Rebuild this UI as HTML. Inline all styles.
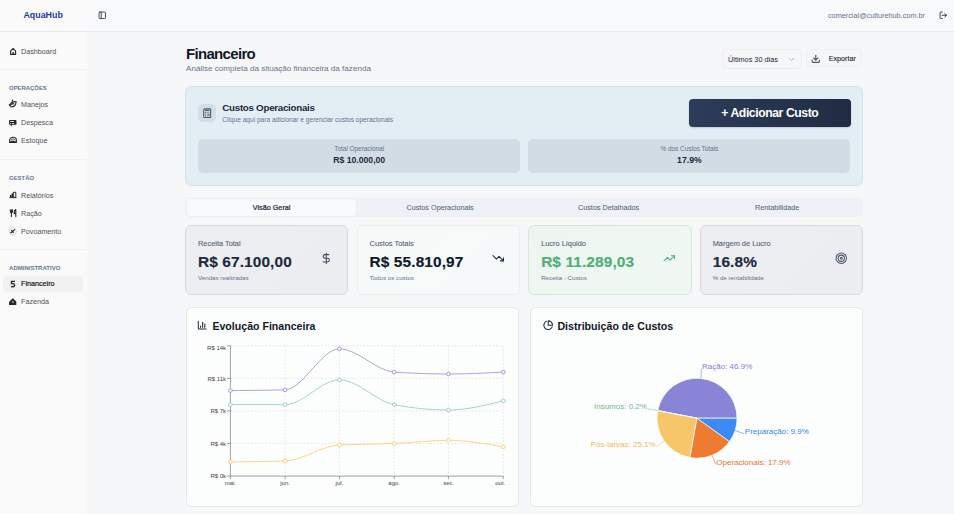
<!DOCTYPE html>
<html><head><meta charset="utf-8"><title>AquaHub - Financeiro</title>
<style>html,body{margin:0;padding:0;width:954px;height:514px;overflow:hidden;font-family:"Liberation Sans", sans-serif;}</style>
</head><body>
<div style="position:relative;width:954px;height:514px;overflow:hidden">
<div style="position:absolute;left:0px;top:0px;width:954px;height:514px;background:#f6f7f9"></div>
<div style="position:absolute;left:0px;top:0px;width:87px;height:514px;background:#fafafa"></div>
<div style="position:absolute;left:87px;top:0px;width:867px;height:31px;background:#f8f9fb"></div>
<div style="position:absolute;left:0px;top:31px;width:954px;height:1px;background:#e8ebef"></div>
<div style="position:absolute;left:23.4px;top:10.67px;font-size:8.9px;line-height:8.9px;font-weight:700;color:#1f3d9c;white-space:nowrap;">AquaHub</div>
<svg style="position:absolute;left:97.6px;top:10.6px;" width="8.6" height="8.6" viewBox="0 0 24 24" fill="none" stroke="#1e293b" stroke-width="2.2" stroke-linecap="round" stroke-linejoin="round"><rect width="18" height="18" x="3" y="3" rx="2"/><path d="M9 3v18"/></svg>
<div style="position:absolute;right:29px;top:11.92px;font-size:7.3px;line-height:7.3px;font-weight:400;color:#64748b;white-space:nowrap;">comercial@culturehub.com.br</div>
<svg style="position:absolute;left:938.8px;top:10.9px;" width="8.6" height="8.6" viewBox="0 0 24 24" fill="none" stroke="#1e293b" stroke-width="2.4" stroke-linecap="round" stroke-linejoin="round"><path d="M9 21H5a2 2 0 0 1-2-2V5a2 2 0 0 1 2-2h4"/><polyline points="16 17 21 12 16 7"/><line x1="21" x2="9" y1="12" y2="12"/></svg>
<div style="position:absolute;left:21px;top:48.01px;font-size:7.2px;line-height:7.2px;font-weight:400;color:#52525b;white-space:nowrap;">Dashboard</div>
<svg style="position:absolute;left:0;top:0" width="30" height="70" viewBox="0 0 30 70"><path d="M10.6 51.2L13.1 48.4L15.6 51.2V54.4H10.6Z" fill="none" stroke="#27272a" stroke-width="1.1" stroke-linejoin="round"/><rect x="12.4" y="52" width="1.4" height="2.6" fill="#27272a"/></svg>
<div style="position:absolute;left:0px;top:69px;width:87px;height:1px;background:#eceff3"></div>
<div style="position:absolute;left:9.1px;top:85.61px;font-size:5.9px;line-height:5.9px;font-weight:700;color:#66768f;white-space:nowrap;">OPERAÇÕES</div>
<div style="position:absolute;left:21px;top:101.21px;font-size:7.2px;line-height:7.2px;font-weight:400;color:#52525b;white-space:nowrap;">Manejos</div>
<div style="position:absolute;left:21px;top:119.01px;font-size:7.2px;line-height:7.2px;font-weight:400;color:#52525b;white-space:nowrap;">Despesca</div>
<div style="position:absolute;left:21px;top:137.01px;font-size:7.2px;line-height:7.2px;font-weight:400;color:#52525b;white-space:nowrap;">Estoque</div>
<div style="position:absolute;left:0px;top:158.6px;width:87px;height:1.0px;background:#eceff3"></div>
<div style="position:absolute;left:9.1px;top:176.21px;font-size:5.9px;line-height:5.9px;font-weight:700;color:#66768f;white-space:nowrap;">GESTÃO</div>
<div style="position:absolute;left:21px;top:192.01px;font-size:7.2px;line-height:7.2px;font-weight:400;color:#52525b;white-space:nowrap;">Relatórios</div>
<div style="position:absolute;left:21px;top:209.91px;font-size:7.2px;line-height:7.2px;font-weight:400;color:#52525b;white-space:nowrap;">Ração</div>
<div style="position:absolute;left:21px;top:227.91px;font-size:7.2px;line-height:7.2px;font-weight:400;color:#52525b;white-space:nowrap;">Povoamento</div>
<div style="position:absolute;left:0px;top:248.6px;width:87px;height:1.0px;background:#eceff3"></div>
<div style="position:absolute;left:9.1px;top:265.42px;font-size:6px;line-height:6px;font-weight:700;color:#66768f;white-space:nowrap;">ADMINISTRATIVO</div>
<div style="position:absolute;left:3.2px;top:275.5px;width:79.6px;height:16.0px;background:#f1f1f2;border-radius:4px"></div>
<div style="position:absolute;left:21px;top:280.01px;font-size:7.2px;line-height:7.2px;font-weight:400;color:#09090b;white-space:nowrap;-webkit-text-stroke:0.15px #09090b;">Financeiro</div>
<div style="position:absolute;left:21px;top:298.01px;font-size:7.2px;line-height:7.2px;font-weight:400;color:#52525b;white-space:nowrap;">Fazenda</div>
<svg style="position:absolute;left:0;top:0" width="30" height="320" viewBox="0 0 30 320" fill="none" stroke="#27272a" stroke-width="1.1" stroke-linecap="round" stroke-linejoin="round">
<path d="M9.8 105.6C10.6 103 13 101.3 16.3 101.7"/><path d="M10.6 106.8C13.4 107 15.6 105.2 16 102.6"/><path d="M12.2 101.2L12.7 100.1"/><path d="M11.8 104.2L13.6 103.6" stroke-width="1.4"/><path d="M9.4 104.4L10.4 105.6"/>
<rect x="9" y="119.9" width="7.5" height="4.8" rx="0.8" fill="#27272a" stroke="none"/><rect x="10.2" y="121" width="3.6" height="0.9" fill="#fafafa" stroke="none"/><rect x="10.2" y="123" width="1" height="0.8" fill="#fafafa" stroke="none"/><rect x="12.3" y="123" width="1.8" height="0.8" fill="#fafafa" stroke="none"/><path d="M11.3 124.8V125.8"/>
<path d="M9.6 142.4V140.2A3.4 3 0 0 1 16.4 140.2V142.4Z"/><rect x="10.4" y="140.8" width="5.2" height="1.8" fill="#27272a" stroke="none"/><path d="M11.2 139.6A2.2 1.8 0 0 1 14.8 139.6" stroke-width="0.8"/>
<rect x="10" y="195" width="1.6" height="2.7" fill="#27272a" stroke="none"/><rect x="11.6" y="193.4" width="1.6" height="4.3" fill="#27272a" stroke="none"/><rect x="13.7" y="192.3" width="2.1" height="5" stroke-width="1"/><path d="M9.8 197.7H16.2" stroke-width="0.8"/>
<path d="M10.3 209.8V211.6C10.3 212.4 11 212.8 11.4 212.8C11.8 212.8 12.5 212.4 12.5 211.6V209.8"/><path d="M11.4 209.8V216.6"/><path d="M15.8 213.8V209.6C14.6 210.2 14.2 211.4 14.2 212.6V213.4H15.8V216.6"/>
<circle cx="12.8" cy="231.3" r="3.6" stroke="#cfcfd3" stroke-width="0.9"/><path d="M10.9 232.8L13 231.2L14.6 229.6M11.6 230.3L13.2 232.4" stroke-width="1.2"/>
<path d="M15 281.4H11.5V283.6H13A1.6 1.6 0 0 1 13 286.8H11.2" stroke-width="1.4" stroke-linecap="butt" stroke-linejoin="miter"/>
<path d="M12.8 298.2L16.3 301.5V305H9.4V301.5Z" fill="#27272a" stroke="none"/><circle cx="12.9" cy="302" r="0.8" fill="#fafafa" stroke="none"/><rect x="9" y="302.3" width="2" height="2.7" fill="#27272a" stroke="none"/>
</svg>
<div style="position:absolute;left:186px;top:46.2px;font-size:15px;line-height:15px;font-weight:700;color:#111827;white-space:nowrap;letter-spacing:-0.68px;">Financeiro</div>
<div style="position:absolute;left:186px;top:64.84px;font-size:8.1px;line-height:8.1px;font-weight:400;color:#64748b;white-space:nowrap;">Análise completa da situação financeira da fazenda</div>
<div style="position:absolute;left:721.5px;top:49.3px;width:80.2px;height:19.8px;background:#f5f6f8;border:1px solid #eceef1;border-radius:4px;box-sizing:border-box"></div>
<div style="position:absolute;left:728px;top:55.62px;font-size:7.3px;line-height:7.3px;font-weight:400;color:#1f2937;white-space:nowrap;">Últimos 30 dias</div>
<svg style="position:absolute;left:786.5px;top:55.2px;" width="9" height="9" viewBox="0 0 24 24" fill="none" stroke="#9ca3af" stroke-width="2" stroke-linecap="round" stroke-linejoin="round"><path d="m6 9 6 6 6-6"/></svg>
<div style="position:absolute;left:805.6px;top:49.3px;width:56.9px;height:17.5px;background:#f5f6f8;border:1px solid #eceef1;border-radius:4px;box-sizing:border-box"></div>
<svg style="position:absolute;left:811.2px;top:53.6px;" width="9.6" height="9.6" viewBox="0 0 24 24" fill="none" stroke="#4b5563" stroke-width="2.8" stroke-linecap="round" stroke-linejoin="round"><path d="M21 15v4a2 2 0 0 1-2 2H5a2 2 0 0 1-2-2v-4"/><polyline points="7 10 12 15 17 10"/><line x1="12" x2="12" y1="15" y2="3"/></svg>
<div style="position:absolute;left:828.7px;top:55.41px;font-size:7.2px;line-height:7.2px;font-weight:400;color:#1f2937;white-space:nowrap;-webkit-text-stroke:0.12px #1f2937;">Exportar</div>
<div style="position:absolute;left:185.2px;top:86.2px;width:678.1px;height:99.8px;background:#e3edf4;border:1px solid #d6e2eb;border-radius:6px;box-sizing:border-box"></div>
<div style="position:absolute;left:198.2px;top:103.8px;width:17.6px;height:17.9px;background:#d3dde6;border-radius:5px"></div>
<svg style="position:absolute;left:201.8px;top:107.6px;" width="10.4" height="10.4" viewBox="0 0 24 24" fill="none" stroke="#475569" stroke-width="2.4" stroke-linecap="round" stroke-linejoin="round"><rect width="16" height="20" x="4" y="2" rx="2"/><line x1="8" x2="16" y1="6" y2="6"/><line x1="16" x2="16" y1="14" y2="18"/><path d="M16 10h.01"/><path d="M12 10h.01"/><path d="M8 10h.01"/><path d="M12 14h.01"/><path d="M8 14h.01"/><path d="M12 18h.01"/><path d="M8 18h.01"/></svg>
<div style="position:absolute;left:222.3px;top:102.6px;font-size:9.8px;line-height:9.8px;font-weight:700;color:#1e293b;white-space:nowrap;letter-spacing:-0.3px;">Custos Operacionais</div>
<div style="position:absolute;left:222.3px;top:117.44px;font-size:6.57px;line-height:6.57px;font-weight:400;color:#64748b;white-space:nowrap;">Clique aqui para adicionar e gerenciar custos operacionais</div>
<div style="position:absolute;left:689px;top:98.8px;width:161.5px;height:28.0px;background:linear-gradient(90deg,#2d3c5a,#212b43);border-radius:4px;box-shadow:0 1px 2px rgba(0,0,0,.15)"></div>
<div style="position:absolute;left:469.8px;width:600px;text-align:center;top:106.77px;font-size:12.2px;line-height:12.2px;font-weight:700;color:#ffffff;white-space:nowrap;letter-spacing:-0.42px;">+ Adicionar Custo</div>
<div style="position:absolute;left:198.2px;top:139px;width:321.9px;height:33.7px;background:#d2dce4;border-radius:5px"></div>
<div style="position:absolute;left:528.2px;top:139px;width:322.3px;height:33.7px;background:#d2dce4;border-radius:5px"></div>
<div style="position:absolute;left:59.2px;width:600px;text-align:center;top:145.58px;font-size:6.4px;line-height:6.4px;font-weight:400;color:#64748b;white-space:nowrap;">Total Operacional</div>
<div style="position:absolute;left:59.2px;width:600px;text-align:center;top:155.67px;font-size:8.66px;line-height:8.66px;font-weight:700;color:#1e293b;white-space:nowrap;">R$ 10.000,00</div>
<div style="position:absolute;left:389.4px;width:600px;text-align:center;top:145.58px;font-size:6.4px;line-height:6.4px;font-weight:400;color:#64748b;white-space:nowrap;">% dos Custos Totais</div>
<div style="position:absolute;left:389.4px;width:600px;text-align:center;top:155.67px;font-size:8.66px;line-height:8.66px;font-weight:700;color:#1e293b;white-space:nowrap;">17.9%</div>
<div style="position:absolute;left:185.2px;top:197.8px;width:678.1px;height:19.7px;background:#eef2f7;border-radius:5px"></div>
<div style="position:absolute;left:187.3px;top:199.4px;width:168.7px;height:16.2px;background:#f8fafc;border-radius:4px;box-shadow:0 0 0 0.5px #e8ecf1"></div>
<div style="position:absolute;left:-28.44px;width:600px;text-align:center;top:204.06px;font-size:7.25px;line-height:7.25px;font-weight:400;color:#1e293b;white-space:nowrap;-webkit-text-stroke:0.22px #1e293b;">Visão Geral</div>
<div style="position:absolute;left:140.09px;width:600px;text-align:center;top:204.06px;font-size:7.25px;line-height:7.25px;font-weight:400;color:#5b677a;white-space:nowrap;-webkit-text-stroke:0.08px #5b677a;">Custos Operacionais</div>
<div style="position:absolute;left:308.61px;width:600px;text-align:center;top:204.06px;font-size:7.25px;line-height:7.25px;font-weight:400;color:#5b677a;white-space:nowrap;-webkit-text-stroke:0.08px #5b677a;">Custos Detalhados</div>
<div style="position:absolute;left:477.14px;width:600px;text-align:center;top:204.06px;font-size:7.25px;line-height:7.25px;font-weight:400;color:#5b677a;white-space:nowrap;-webkit-text-stroke:0.08px #5b677a;">Rentabilidade</div>
<div style="position:absolute;left:185.2px;top:225.3px;width:163.3px;height:69.3px;background:linear-gradient(135deg,#eceef1,#ebedf0);border:1px solid #d5d9df;border-radius:6px;box-sizing:border-box"></div>
<div style="position:absolute;left:198.0px;top:239.74px;font-size:7.4px;line-height:7.4px;font-weight:400;color:#566173;white-space:nowrap;-webkit-text-stroke:0.1px #566173;">Receita Total</div>
<div style="position:absolute;left:198.0px;top:254.16px;font-size:15.4px;line-height:15.4px;font-weight:700;color:#1e293b;white-space:nowrap;letter-spacing:0.12px;-webkit-text-stroke:0.15px #1e293b;">R$ 67.100,00</div>
<div style="position:absolute;left:198.0px;top:275.25px;font-size:6.2px;line-height:6.2px;font-weight:400;color:#64748b;white-space:nowrap;">Vendas realizadas</div>
<svg style="position:absolute;left:320.0px;top:251.9px;" width="12.5" height="12.5" viewBox="0 0 24 24" fill="none" stroke="#3f4a5e" stroke-width="2" stroke-linecap="round" stroke-linejoin="round"><line x1="12" x2="12" y1="2" y2="22"/><path d="M17 5H9.5a3.5 3.5 0 0 0 0 7h5a3.5 3.5 0 0 1 0 7H6"/></svg>
<div style="position:absolute;left:356.77px;top:225.3px;width:163.3px;height:69.3px;background:linear-gradient(135deg,#f5faf9,#f6f9f9);border:1px solid #e8f0ee;border-radius:6px;box-sizing:border-box"></div>
<div style="position:absolute;left:369.57px;top:239.74px;font-size:7.4px;line-height:7.4px;font-weight:400;color:#566173;white-space:nowrap;-webkit-text-stroke:0.1px #566173;">Custos Totais</div>
<div style="position:absolute;left:369.57px;top:254.16px;font-size:15.4px;line-height:15.4px;font-weight:700;color:#111827;white-space:nowrap;letter-spacing:0.12px;-webkit-text-stroke:0.15px #111827;">R$ 55.810,97</div>
<div style="position:absolute;left:369.57px;top:275.25px;font-size:6.2px;line-height:6.2px;font-weight:400;color:#64748b;white-space:nowrap;">Todos os custos</div>
<svg style="position:absolute;left:491.57px;top:251.9px;" width="12.5" height="12.5" viewBox="0 0 24 24" fill="none" stroke="#1e293b" stroke-width="2" stroke-linecap="round" stroke-linejoin="round"><polyline points="22 17 13.5 8.5 8.5 13.5 2 7"/><polyline points="16 17 22 17 22 11"/></svg>
<div style="position:absolute;left:528.34px;top:225.3px;width:163.3px;height:69.3px;background:linear-gradient(135deg,#ecf6ef,#f0f7f2);border:1px solid #d3eadb;border-radius:6px;box-sizing:border-box"></div>
<div style="position:absolute;left:541.14px;top:239.74px;font-size:7.4px;line-height:7.4px;font-weight:400;color:#566173;white-space:nowrap;-webkit-text-stroke:0.1px #566173;">Lucro Líquido</div>
<div style="position:absolute;left:541.14px;top:254.16px;font-size:15.4px;line-height:15.4px;font-weight:700;color:#4caf7a;white-space:nowrap;letter-spacing:0.12px;-webkit-text-stroke:0.15px #4caf7a;">R$ 11.289,03</div>
<div style="position:absolute;left:541.14px;top:275.25px;font-size:6.2px;line-height:6.2px;font-weight:400;color:#64748b;white-space:nowrap;">Receita - Custos</div>
<svg style="position:absolute;left:663.14px;top:251.9px;" width="12.5" height="12.5" viewBox="0 0 24 24" fill="none" stroke="#4caf7a" stroke-width="2" stroke-linecap="round" stroke-linejoin="round"><polyline points="22 7 13.5 15.5 8.5 10.5 2 17"/><polyline points="16 7 22 7 22 13"/></svg>
<div style="position:absolute;left:699.91px;top:225.3px;width:163.3px;height:69.3px;background:linear-gradient(135deg,#eceef1,#ebedf0);border:1px solid #d5d9df;border-radius:6px;box-sizing:border-box"></div>
<div style="position:absolute;left:712.71px;top:239.74px;font-size:7.4px;line-height:7.4px;font-weight:400;color:#566173;white-space:nowrap;-webkit-text-stroke:0.1px #566173;">Margem de Lucro</div>
<div style="position:absolute;left:712.71px;top:254.16px;font-size:15.4px;line-height:15.4px;font-weight:700;color:#1e293b;white-space:nowrap;letter-spacing:0.12px;-webkit-text-stroke:0.15px #1e293b;">16.8%</div>
<div style="position:absolute;left:712.71px;top:275.25px;font-size:6.2px;line-height:6.2px;font-weight:400;color:#64748b;white-space:nowrap;">% de rentabilidade</div>
<svg style="position:absolute;left:834.71px;top:251.9px;" width="12.5" height="12.5" viewBox="0 0 24 24" fill="none" stroke="#4a556b" stroke-width="2" stroke-linecap="round" stroke-linejoin="round"><circle cx="12" cy="12" r="10"/><circle cx="12" cy="12" r="6"/><circle cx="12" cy="12" r="2"/></svg>
<div style="position:absolute;left:185.5px;top:307px;width:333.0px;height:200px;background:#fcfdfd;border:1px solid #e5e8ec;border-radius:6px;box-sizing:border-box"></div>
<div style="position:absolute;left:530.2px;top:307px;width:333.1px;height:200px;background:#fcfdfd;border:1px solid #e5e8ec;border-radius:6px;box-sizing:border-box"></div>
<svg style="position:absolute;left:197.4px;top:320.1px;" width="10.4" height="10.4" viewBox="0 0 24 24" fill="none" stroke="#1e293b" stroke-width="2.4" stroke-linecap="round" stroke-linejoin="round"><path d="M3 3v16a2 2 0 0 0 2 2h16"/><path d="M18 17V9"/><path d="M13 17V5"/><path d="M8 17v-3"/></svg>
<div style="position:absolute;left:212.4px;top:321.13px;font-size:10.6px;line-height:10.6px;font-weight:700;color:#111827;white-space:nowrap;">Evolução Financeira</div>
<svg style="position:absolute;left:542.5px;top:320.2px;" width="10.4" height="10.4" viewBox="0 0 24 24" fill="none" stroke="#1e293b" stroke-width="2.4" stroke-linecap="round" stroke-linejoin="round"><path d="M21.21 15.89A10 10 0 1 1 8 2.83"/><path d="M22 12A10 10 0 0 0 12 2v10z"/></svg>
<div style="position:absolute;left:557.4px;top:321.08px;font-size:10.65px;line-height:10.65px;font-weight:700;color:#111827;white-space:nowrap;">Distribuição de Custos</div>
<svg style="position:absolute;left:0;top:0" width="954" height="514" viewBox="0 0 954 514"><line x1="230.4" x2="503.3" y1="345.8" y2="345.8" stroke="#d0d0d0" stroke-width="0.6" stroke-dasharray="1.5 2"/><line x1="230.4" x2="503.3" y1="378.3" y2="378.3" stroke="#d0d0d0" stroke-width="0.6" stroke-dasharray="1.5 2"/><line x1="230.4" x2="503.3" y1="410.9" y2="410.9" stroke="#d0d0d0" stroke-width="0.6" stroke-dasharray="1.5 2"/><line x1="230.4" x2="503.3" y1="443.4" y2="443.4" stroke="#d0d0d0" stroke-width="0.6" stroke-dasharray="1.5 2"/><line x1="285.1" x2="285.1" y1="345.8" y2="476.1" stroke="#d0d0d0" stroke-width="0.6" stroke-dasharray="1.5 2"/><line x1="339.4" x2="339.4" y1="345.8" y2="476.1" stroke="#d0d0d0" stroke-width="0.6" stroke-dasharray="1.5 2"/><line x1="394.2" x2="394.2" y1="345.8" y2="476.1" stroke="#d0d0d0" stroke-width="0.6" stroke-dasharray="1.5 2"/><line x1="448.4" x2="448.4" y1="345.8" y2="476.1" stroke="#d0d0d0" stroke-width="0.6" stroke-dasharray="1.5 2"/><line x1="503.3" x2="503.3" y1="345.8" y2="476.1" stroke="#d0d0d0" stroke-width="0.6" stroke-dasharray="1.5 2"/><line x1="230.4" x2="230.4" y1="345.8" y2="476.1" stroke="#666" stroke-width="0.6"/><line x1="230.4" x2="503.3" y1="476.1" y2="476.1" stroke="#8a8a8a" stroke-width="0.8"/><line x1="226.8" x2="230.4" y1="345.8" y2="345.8" stroke="#666" stroke-width="0.6"/><text x="226.1" y="349.9" font-family="Liberation Sans" font-size="6" fill="#444" text-anchor="end">R$ 14k</text><line x1="226.8" x2="230.4" y1="378.3" y2="378.3" stroke="#666" stroke-width="0.6"/><text x="226.1" y="380.6" font-family="Liberation Sans" font-size="6" fill="#444" text-anchor="end">R$ 11k</text><line x1="226.8" x2="230.4" y1="410.9" y2="410.9" stroke="#666" stroke-width="0.6"/><text x="226.1" y="413.2" font-family="Liberation Sans" font-size="6" fill="#444" text-anchor="end">R$ 7k</text><line x1="226.8" x2="230.4" y1="443.4" y2="443.4" stroke="#666" stroke-width="0.6"/><text x="226.1" y="445.7" font-family="Liberation Sans" font-size="6" fill="#444" text-anchor="end">R$ 4k</text><line x1="226.8" x2="230.4" y1="476.1" y2="476.1" stroke="#666" stroke-width="0.6"/><text x="226.1" y="478.40000000000003" font-family="Liberation Sans" font-size="6" fill="#444" text-anchor="end">R$ 0k</text><line x1="230.4" x2="230.4" y1="476.1" y2="479.2" stroke="#666" stroke-width="0.6"/><text x="230.4" y="485.4" font-family="Liberation Sans" font-size="6" fill="#444" text-anchor="middle">mai.</text><line x1="285.1" x2="285.1" y1="476.1" y2="479.2" stroke="#666" stroke-width="0.6"/><text x="285.1" y="485.4" font-family="Liberation Sans" font-size="6" fill="#444" text-anchor="middle">jun.</text><line x1="339.4" x2="339.4" y1="476.1" y2="479.2" stroke="#666" stroke-width="0.6"/><text x="339.4" y="485.4" font-family="Liberation Sans" font-size="6" fill="#444" text-anchor="middle">jul.</text><line x1="394.2" x2="394.2" y1="476.1" y2="479.2" stroke="#666" stroke-width="0.6"/><text x="394.2" y="485.4" font-family="Liberation Sans" font-size="6" fill="#444" text-anchor="middle">ago.</text><line x1="448.4" x2="448.4" y1="476.1" y2="479.2" stroke="#666" stroke-width="0.6"/><text x="448.4" y="485.4" font-family="Liberation Sans" font-size="6" fill="#444" text-anchor="middle">set.</text><line x1="503.3" x2="503.3" y1="476.1" y2="479.2" stroke="#666" stroke-width="0.6"/><text x="500.3" y="485.4" font-family="Liberation Sans" font-size="6" fill="#444" text-anchor="middle">out.</text><path d="M230.4,390.6 C248.63,390.47 266.87,390.33 285.1,389.8 C303.20,389.27 321.30,348.80 339.4,348.8 C357.67,348.80 375.93,370.82 394.2,372.1 C412.27,373.37 430.33,374.00 448.4,374.0 C466.70,374.00 485.00,373.05 503.3,372.1" fill="none" stroke="#8884d8" stroke-width="0.9" stroke-opacity="0.8"/><circle cx="230.4" cy="390.6" r="1.8" fill="#fff" stroke="#8884d8" stroke-width="0.8"/><circle cx="285.1" cy="389.8" r="1.8" fill="#fff" stroke="#8884d8" stroke-width="0.8"/><circle cx="339.4" cy="348.8" r="1.8" fill="#fff" stroke="#8884d8" stroke-width="0.8"/><circle cx="394.2" cy="372.1" r="1.8" fill="#fff" stroke="#8884d8" stroke-width="0.8"/><circle cx="448.4" cy="374.0" r="1.8" fill="#fff" stroke="#8884d8" stroke-width="0.8"/><circle cx="503.3" cy="372.1" r="1.8" fill="#fff" stroke="#8884d8" stroke-width="0.8"/><path d="M230.4,404.6 C248.63,404.60 266.87,404.60 285.1,404.6 C303.20,404.60 321.30,379.80 339.4,379.8 C357.67,379.80 375.93,401.13 394.2,404.7 C412.27,408.23 430.33,410.00 448.4,410.0 C466.70,410.00 485.00,405.45 503.3,400.9" fill="none" stroke="#82ca9d" stroke-width="0.9" stroke-opacity="0.8"/><circle cx="230.4" cy="404.6" r="1.8" fill="#fff" stroke="#82ca9d" stroke-width="0.8"/><circle cx="285.1" cy="404.6" r="1.8" fill="#fff" stroke="#82ca9d" stroke-width="0.8"/><circle cx="339.4" cy="379.8" r="1.8" fill="#fff" stroke="#82ca9d" stroke-width="0.8"/><circle cx="394.2" cy="404.7" r="1.8" fill="#fff" stroke="#82ca9d" stroke-width="0.8"/><circle cx="448.4" cy="410.0" r="1.8" fill="#fff" stroke="#82ca9d" stroke-width="0.8"/><circle cx="503.3" cy="400.9" r="1.8" fill="#fff" stroke="#82ca9d" stroke-width="0.8"/><path d="M230.4,461.9 C248.63,461.75 266.87,461.60 285.1,461.0 C303.20,460.40 321.30,445.76 339.4,444.9 C357.67,444.03 375.93,444.37 394.2,443.6 C412.27,442.83 430.33,440.30 448.4,440.3 C466.70,440.30 485.00,443.60 503.3,446.9" fill="none" stroke="#ffc658" stroke-width="0.9" stroke-opacity="0.8"/><circle cx="230.4" cy="461.9" r="1.8" fill="#fff" stroke="#ffc658" stroke-width="0.8"/><circle cx="285.1" cy="461.0" r="1.8" fill="#fff" stroke="#ffc658" stroke-width="0.8"/><circle cx="339.4" cy="444.9" r="1.8" fill="#fff" stroke="#ffc658" stroke-width="0.8"/><circle cx="394.2" cy="443.6" r="1.8" fill="#fff" stroke="#ffc658" stroke-width="0.8"/><circle cx="448.4" cy="440.3" r="1.8" fill="#fff" stroke="#ffc658" stroke-width="0.8"/><circle cx="503.3" cy="446.9" r="1.8" fill="#fff" stroke="#ffc658" stroke-width="0.8"/><path d="M697.0,418.2 L737.00,418.20 A40.0,40.0 0 0 0 657.76,410.46 Z" fill="#8884d8" stroke="#fff" stroke-width="0.7"/><path d="M700.89,378.39 L701.50,368.90" stroke="#8884d8" stroke-width="0.6" fill="none"/><text x="702.0" y="368.9" font-family="Liberation Sans" font-size="8" fill="#8581d6" text-anchor="start">Ração: 46.9%</text><path d="M697.0,418.2 L657.76,410.46 A40.0,40.0 0 0 0 657.66,410.95 Z" fill="#82ca9d" stroke="#fff" stroke-width="0.7"/><path d="M657.71,410.70 L647.40,408.80" stroke="#82ca9d" stroke-width="0.6" fill="none"/><text x="646.9" y="408.8" font-family="Liberation Sans" font-size="8" fill="#6fbb8c" text-anchor="end">Insumos: 0.2%</text><path d="M697.0,418.2 L657.66,410.95 A40.0,40.0 0 0 0 690.00,457.58 Z" fill="#f7c66b" stroke="#fff" stroke-width="0.7"/><path d="M664.13,440.99 L656.20,446.60" stroke="#f7c66b" stroke-width="0.6" fill="none"/><text x="655.7" y="446.6" font-family="Liberation Sans" font-size="8" fill="#f2bb55" text-anchor="end">Pós-larvas: 25.1%</text><path d="M697.0,418.2 L690.00,457.58 A40.0,40.0 0 0 0 729.51,441.51 Z" fill="#ef7b30" stroke="#fff" stroke-width="0.7"/><path d="M712.07,455.25 L715.80,464.70" stroke="#ef7b30" stroke-width="0.6" fill="none"/><text x="716.3" y="464.7" font-family="Liberation Sans" font-size="8" fill="#ec7429" text-anchor="start">Operacionais: 17.9%</text><path d="M697.0,418.2 L729.51,441.51 A40.0,40.0 0 0 0 737.00,418.20 Z" fill="#3b8af6" stroke="#fff" stroke-width="0.7"/><path d="M735.08,430.44 L744.30,433.80" stroke="#3b8af6" stroke-width="0.6" fill="none"/><text x="744.8" y="433.8" font-family="Liberation Sans" font-size="8" fill="#3686f4" text-anchor="start">Preparação: 9.9%</text></svg>
</div></body></html>
